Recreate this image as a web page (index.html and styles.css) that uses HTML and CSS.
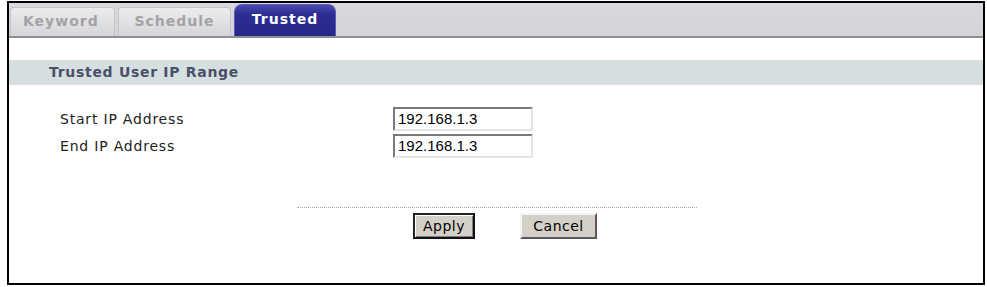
FILE: index.html
```html
<!DOCTYPE html>
<html lang="en">
<head>
    <meta charset="UTF-8">
    <title>Trusted User IP Range</title>
    <link rel="stylesheet" href="styles.css">
</head>
<body>
    <div class="frame">
        <div class="tabs">
            <div class="tab">Keyword</div>
            <div class="tab">Schedule</div>
            <div class="tab active">Trusted</div>
        </div>
        <div class="section-title">Trusted User IP Range</div>
        <div class="form">
            <div class="row">
                <label for="start-ip">Start IP Address</label>
                <input type="text" id="start-ip" value="192.168.1.3">
            </div>
            <div class="row">
                <label for="end-ip">End IP Address</label>
                <input type="text" id="end-ip" value="192.168.1.3">
            </div>
        </div>
        <div class="actions">
            <div class="divider"></div>
            <div class="buttons">
                <button type="button" class="btn default">Apply</button>
                <button type="button" class="btn">Cancel</button>
            </div>
        </div>
    </div>
</body>
</html>
```

FILE: styles.css
```css
body {
    margin: 0;
    background: #fff;
    font-family: 'DejaVu Sans', Verdana, sans-serif;
}
.frame {
    box-sizing: border-box;
    width: 978px;
    height: 284px;
    margin: 1px 0 0 7px;
    border: 2px solid #000;
    background: #fff;
}
.tabs {
    display: flex;
    align-items: flex-end;
    gap: 3px;
    height: 33px;
    padding-left: 1px;
    background: linear-gradient(#d9d9dd, #d3d3d8);
    border-bottom: 2px solid #8e8e94;
}
.tab {
    box-sizing: border-box;
    height: 29px;
    padding: 0 0 3px 12px;
    display: flex;
    align-items: center;
    font-size: 14px;
    font-weight: bold;
    letter-spacing: 1px;
    color: #a3a3a6;
    background: linear-gradient(#ececee, #d6d6da);
    border: 1px solid #c4c4c8;
    border-bottom: none;
    border-radius: 4px 4px 0 0;
}
.tab:nth-child(1) { width: 105px; }
.tab:nth-child(2) { width: 113px; justify-content: center; padding-left: 0; }
.tab.active {
    width: 102px;
    height: 32px;
    padding: 0 0 3px;
    justify-content: center;
    color: #fff;
    background: linear-gradient(#4848b0, #2c2c92 30%, #28288a);
    border: 1px solid #5a5ab8;
    border-bottom: none;
    border-radius: 8px 8px 0 0;
}
.section-title {
    margin-top: 22px;
    height: 25px;
    line-height: 25px;
    padding-left: 40px;
    background: #d6dfdf;
    font-size: 14px;
    font-weight: bold;
    letter-spacing: 0.7px;
    color: #4a5068;
}
.form {
    padding: 20px 0 0 51px;
}
.row {
    display: flex;
    align-items: center;
    height: 27px;
}
.row label {
    width: 333px;
    font-size: 14px;
    letter-spacing: 0.8px;
    color: #222;
}
.row input {
    box-sizing: border-box;
    width: 140px;
    height: 24px;
    padding: 0 3px;
    font-family: 'Liberation Sans', Arial, sans-serif;
    font-size: 15px;
    color: #000;
    border: 2px solid;
    border-color: #7a7a7a #e4e4e4 #e4e4e4 #7a7a7a;
    background: #fff;
}
.actions {
    padding-top: 48px;
}
.divider {
    width: 400px;
    margin-left: 288px;
    border-top: 1px dotted #a8a8a8;
}
.buttons {
    display: flex;
    gap: 45px;
    margin: 5px 0 0 404px;
}
.btn {
    box-sizing: border-box;
    height: 26px;
    padding: 0 8px;
    font-family: 'DejaVu Sans', Verdana, sans-serif;
    font-size: 14px;
    letter-spacing: 0.5px;
    color: #000;
    background: #d4d0c8;
    border: 2px solid;
    border-color: #f4f4f4 #5a5a5a #5a5a5a #f4f4f4;
}
.btn.default {
    width: 62px;
    border-color: #222 #111 #111 #222;
    box-shadow: inset 1px 1px 0 #fff, inset -1px -1px 0 #808080;
}
.btn:not(.default) {
    width: 77px;
}
```
